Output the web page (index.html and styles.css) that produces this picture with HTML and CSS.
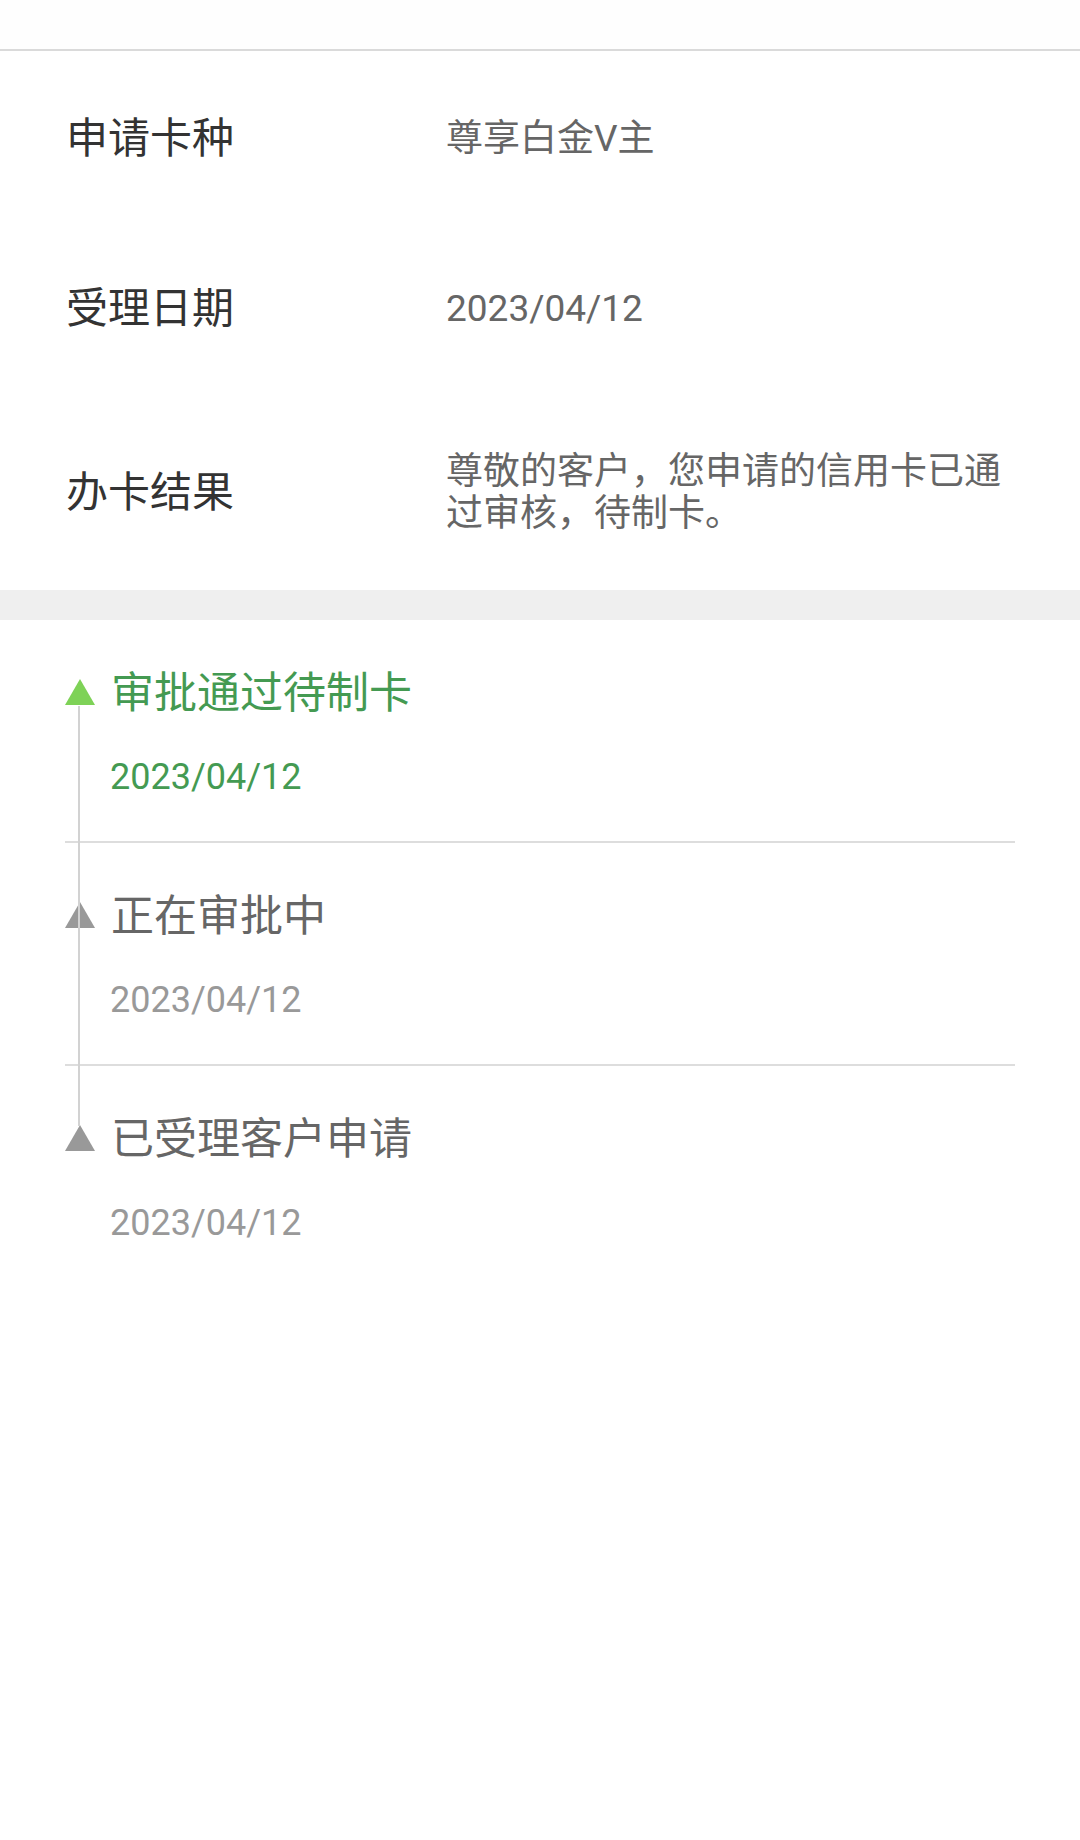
FILE: index.html
```html
<!DOCTYPE html>
<html lang="zh-CN">
<head>
<meta charset="utf-8">
<title>办卡进度</title>
<link rel="stylesheet" href="styles.css">
</head>
<body>
<div class="page">
  <header class="topbar"></header>
  <section class="info">
    <div class="row">
      <div class="label">申请卡种</div>
      <div class="value">尊享白金V主</div>
    </div>
    <div class="row">
      <div class="label">受理日期</div>
      <div class="value">2023/04/12</div>
    </div>
    <div class="row row-multi">
      <div class="label">办卡结果</div>
      <div class="value">尊敬的客户，您申请的信用卡已通过审核，待制卡。</div>
    </div>
  </section>
  <div class="band"></div>
  <section class="timeline">
    <div class="track"></div>
    <div class="step step-active">
      <div class="step-head">
        <span class="tri"></span>
        <span class="step-title">审批通过待制卡</span>
      </div>
      <div class="step-date">2023/04/12</div>
    </div>
    <div class="step">
      <div class="step-head">
        <span class="tri"></span>
        <span class="step-title">正在审批中</span>
      </div>
      <div class="step-date">2023/04/12</div>
    </div>
    <div class="step step-last">
      <div class="step-head">
        <span class="tri"></span>
        <span class="step-title">已受理客户申请</span>
      </div>
      <div class="step-date">2023/04/12</div>
    </div>
  </section>
</div>
</body>
</html>
```

FILE: styles.css
```css
* { box-sizing: border-box; }
html, body { margin: 0; padding: 0; background: #ffffff; }
body {
  font-family: Roboto, "Noto Sans CJK SC", "Noto Sans", sans-serif;
  width: 1080px;
  min-height: 1840px;
}
.topbar {
  height: 51px;
  border-bottom: 2px solid #dadada;
  background: #fefefe;
}
.info { display: flex; flex-direction: column; }
.row {
  display: flex;
  align-items: center;
  padding: 63px 74px 57px 66px;
}
.row-multi { padding-top: 60px; padding-bottom: 55px; }
.label {
  width: 380px;
  flex: none;
  font-size: 42px;
  line-height: 50px;
  color: #333333;
}
.value {
  flex: 1;
  font-size: 37px;
  line-height: 42px;
  color: #666666;
}
.band { height: 30px; background: #efefef; }
.timeline {
  position: relative;
  padding: 0 65px;
}
.track {
  position: absolute;
  left: 78px;
  top: 86px;
  width: 2px;
  height: 420px;
  background: #d2d2d2;
}
.step {
  padding: 48px 0 42px;
  border-bottom: 2px solid #dddddd;
}
.step-last { border-bottom: none; }
.step-head {
  display: flex;
  align-items: center;
  gap: 16px;
  height: 50px;
}
.tri {
  width: 0;
  height: 0;
  border-left: 15px solid transparent;
  border-right: 15px solid transparent;
  border-bottom: 26px solid #999999;
  margin-top: -3px;
  flex: none;
}
.step-title {
  font-size: 43px;
  line-height: 50px;
  color: #666666;
}
.step-date {
  margin-top: 37px;
  padding-left: 45px;
  font-size: 36px;
  line-height: 44px;
  color: #999999;
}
.step-active .tri { border-bottom-color: #7ed257; }
.step-active .step-title { color: #449a52; }
.step-active .step-date { color: #449a52; }
```
